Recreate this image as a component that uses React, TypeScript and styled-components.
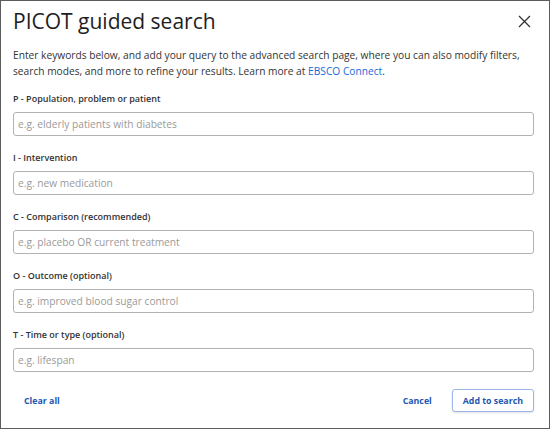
import { ReactElement } from 'react';
import styled, { createGlobalStyle } from 'styled-components';

const GlobalStyle = createGlobalStyle`
  html, body {
    margin: 0;
    padding: 0;
    background: #fff;
  }
  * {
    box-sizing: border-box;
  }
`;

const Dialog = styled.div`
  width: 550px;
  height: 429px;
  border: 1px solid #5c5c5c;
  background: #fff;
  padding: 5px 15px 0 12px;
  font-family: 'Open Sans', 'Noto Sans', sans-serif;
  color: #333;
  display: flex;
  flex-direction: column;
`;

const Header = styled.div`
  display: flex;
  justify-content: space-between;
  align-items: center;
`;

const Title = styled.h1`
  margin: 0;
  font-size: 21px;
  line-height: 30px;
  font-weight: 400;
  color: #1e1e1e;
`;

const CloseButton = styled.button`
  width: 22px;
  height: 22px;
  border: 0;
  padding: 0;
  background: none;
  display: flex;
  align-items: center;
  justify-content: center;
  margin-right: -1px;
  cursor: pointer;
`;

const Intro = styled.p`
  margin: 11px 0 0;
  font-size: 10.2px;
  line-height: 16px;
  color: #333;
`;

const Link = styled.a`
  color: #1a6ad6;
  text-decoration: none;
`;

const Fields = styled.div`
  display: flex;
  flex-direction: column;
  gap: 14px;
  margin-top: 12px;
`;

const Field = styled.label`
  display: flex;
  flex-direction: column;
  gap: 5px;
`;

const FieldLabel = styled.span`
  font-size: 9px;
  line-height: 16px;
  font-weight: 600;
  color: #333;
`;

const Input = styled.input`
  height: 24px;
  width: 100%;
  border: 1px solid #b3b3b3;
  border-radius: 3px;
  padding: 0 4px;
  font-family: inherit;
  font-size: 10.2px;
  color: #333;
  outline: none;
  &::placeholder {
    color: #9a9a9a;
  }
`;

const Footer = styled.div`
  display: flex;
  align-items: center;
  justify-content: space-between;
  margin-top: 17px;
`;

const Actions = styled.div`
  display: flex;
  align-items: center;
  gap: 9px;
`;

const Button = styled.button<{ $outlined?: boolean }>`
  height: 23px;
  padding: 0 10px;
  font-family: inherit;
  font-size: 8.8px;
  font-weight: 700;
  color: #2457b2;
  background: #fff;
  border: 1px solid ${(p) => (p.$outlined ? '#9cb5e8' : 'transparent')};
  border-radius: 3px;
  box-shadow: ${(p) => (p.$outlined ? '0 1px 2px rgba(0, 0, 0, 0.12)' : 'none')};
  cursor: pointer;
`;

const fields = [
  { label: 'P - Population, problem or patient', placeholder: 'e.g. elderly patients with diabetes' },
  { label: 'I - Intervention', placeholder: 'e.g. new medication' },
  { label: 'C - Comparison (recommended)', placeholder: 'e.g. placebo OR current treatment' },
  { label: 'O - Outcome (optional)', placeholder: 'e.g. improved blood sugar control' },
  { label: 'T - Time or type (optional)', placeholder: 'e.g. lifespan' },
];

export default function App(): ReactElement {
  return (
    <>
      <GlobalStyle />
      <Dialog>
        <Header>
          <Title>PICOT guided search</Title>
          <CloseButton aria-label="Close">
            <svg width="13" height="13" viewBox="0 0 13 13">
              <path d="M1 1L12 12M12 1L1 12" stroke="#333" strokeWidth="1.3" fill="none" />
            </svg>
          </CloseButton>
        </Header>
        <Intro>
          Enter keywords below, and add your query to the advanced search page, where you can also modify filters,
          search modes, and more to refine your results. Learn more at <Link href="#">EBSCO Connect</Link>.
        </Intro>
        <Fields>
          {fields.map((f) => (
            <Field key={f.label}>
              <FieldLabel>{f.label}</FieldLabel>
              <Input placeholder={f.placeholder} />
            </Field>
          ))}
        </Fields>
        <Footer>
          <Button>Clear all</Button>
          <Actions>
            <Button>Cancel</Button>
            <Button $outlined>Add to search</Button>
          </Actions>
        </Footer>
      </Dialog>
    </>
  );
}
